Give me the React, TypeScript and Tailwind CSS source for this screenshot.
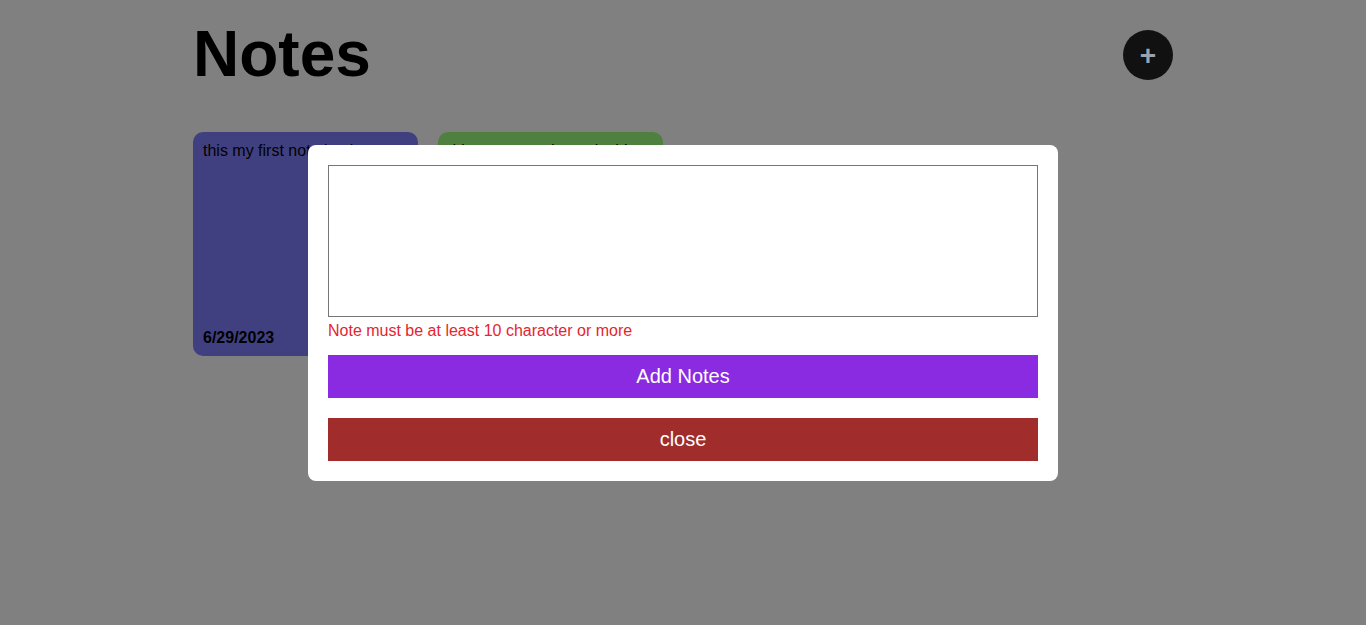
export default function App() {
  return (
    <div className="min-h-[625px] w-full bg-[#808080]" style={{ fontFamily: '"Liberation Sans", Arial, sans-serif' }}>
      <div className="mx-auto w-[980px]">
        <div className="flex items-center justify-between pt-[18px]">
          <h1 className="text-[64px] font-bold leading-[73.5px] text-black">Notes</h1>
          <button className="flex h-[50px] w-[50px] items-center justify-center rounded-full bg-[#111111] pt-[3px] text-[28px] font-bold leading-none text-[#9aa2ae]">
            +
          </button>
        </div>
        <div className="mt-[40px] flex gap-[20px]">
          <div className="flex h-[224px] w-[225px] flex-col justify-between rounded-[10px] bg-[#404080] px-[10px] pt-[7px] pb-[6px] text-[16px] text-black">
            <p>this my first note by the</p>
            <p className="font-bold">6/29/2023</p>
          </div>
          <div className="flex h-[224px] w-[225px] flex-col justify-between rounded-[10px] bg-[#508040] px-[10px] pt-[7px] pb-[6px] text-[16px] text-black">
            <p>this my second note is this</p>
            <p className="font-bold">6/29/2023</p>
          </div>
        </div>
      </div>
      <div className="fixed inset-0 flex items-center justify-center">
        <div className="w-[750px] rounded-[8px] bg-white p-[20px]">
          <textarea className="block h-[152px] w-full resize-none border border-[#767676] bg-white" />
          <p className="mt-[5px] text-[16px] leading-[18px] text-[#e3262f]">Note must be at least 10 character or more</p>
          <button className="mt-[15px] block h-[43px] w-full bg-[#8a2be2] text-[20px] text-white">Add Notes</button>
          <button className="mt-[20px] block h-[43px] w-full bg-[#a02c2c] text-[20px] text-white">close</button>
        </div>
      </div>
    </div>
  );
}
